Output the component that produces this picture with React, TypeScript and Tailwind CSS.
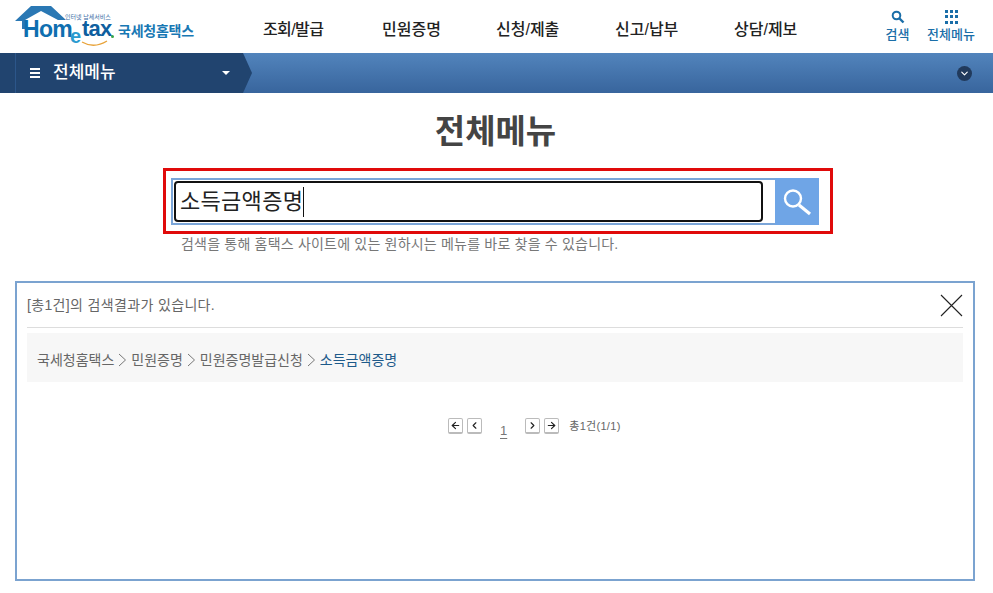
import React from 'react';
import { ArrowLeft, ArrowRight, ChevronDown, ChevronLeft, ChevronRight } from 'lucide-react';

const FONT = "font-['Liberation_Sans','Noto_Sans_CJK_KR',sans-serif]";
const menus = [
  { label: '조회/발급', w: 'w-[119px]', track: 'tracking-[-0.6px]' },
  { label: '민원증명', w: 'w-[114px]', track: '' },
  { label: '신청/제출', w: 'w-[119px]', track: '' },
  { label: '신고/납부', w: 'w-[119px]', track: '' },
  { label: '상담/제보', w: 'w-[66px]', track: '' },
];

const Logo = () => (
  <div className="relative w-[200px] h-[53px] shrink-0">
    <svg className="absolute left-[14px] top-[5px]" width="54" height="26" viewBox="0 0 54 26">
      <path d="M1 16 L17 1 L37 1 L52 15 L44 15 L27 6 L11 15 L11 24 L8 24 L8 16 Z" fill="#2a78b4" />
    </svg>
    <span className="absolute left-[65px] top-[14px] text-[6px] leading-[6px] text-[#3a6ea5] whitespace-nowrap">인터넷 납세서비스</span>
    <span className="absolute left-[23px] top-[21px] text-[23px] leading-[16px] font-bold tracking-[-0.7px] text-[#0f6fb0]">Hom</span>
    <span className="absolute left-[70px] top-[26px] text-[20px] leading-[20px] font-bold text-[#2a9bd0]">e</span>
    <span className="absolute left-[82px] top-[21px] text-[22px] leading-[16px] font-bold tracking-[-0.8px] text-[#0f5f9f]">tax</span>
    <span className="absolute left-[111px] top-[35px] w-[3px] h-[3px] rounded-full bg-[#3aa648]" />
    <svg className="absolute left-[80px] top-[40px]" width="30" height="9" viewBox="0 0 30 9">
      <path d="M2 2 Q14 9 27 1" fill="none" stroke="#e8a33a" strokeWidth="1.3" />
    </svg>
    <span className="absolute left-[118px] top-[22px] text-[14px] leading-[18px] font-bold tracking-[-0.25px] text-[#1878b4] whitespace-nowrap">국세청홈택스</span>
  </div>
);

const Sep = () => (
  <svg width="17" height="14" viewBox="0 0 17 14" className="shrink-0">
    <path d="M5 1 L11.5 7 L5 13" fill="none" stroke="#777" strokeWidth="1" />
  </svg>
);

export default function App() {
  return (
    <div className={`${FONT} w-[993px] h-[593px] bg-white overflow-hidden flex flex-col`}>
      {/* header */}
      <header className="h-[53px] flex items-start shrink-0">
        <Logo />
        <nav className="flex ml-[63px] mt-[20px]">
          {menus.map((m) => (
            <span key={m.label} className={`${m.w} ${m.track} text-[16px] leading-[20px] font-medium text-[#222] whitespace-nowrap`}>{m.label}</span>
          ))}
        </nav>
        <div className="ml-auto flex mr-[18px] mt-[9px] gap-[17px] text-[#1a6ea8] text-[13px] font-medium">
          <div className="flex flex-col items-center w-[25px]">
            <svg width="14" height="14" viewBox="0 0 14 14" className="mt-px">
              <circle cx="5.5" cy="5.5" r="3.8" fill="none" stroke="#1a6ea8" strokeWidth="2" />
              <path d="M8.5 8.5 L12.5 12.5" stroke="#1a6ea8" strokeWidth="2.4" />
            </svg>
            <span className="mt-[2px] leading-[18px] whitespace-nowrap">검색</span>
          </div>
          <div className="flex flex-col items-center w-[48px]">
            <div className="grid grid-cols-3 gap-[2px] w-[13px] mt-px h-[14px]">
              {Array.from({ length: 9 }).map((_, i) => (
                <span key={i} className="w-[3px] h-[3px] bg-[#1a6ea8]" />
              ))}
            </div>
            <span className="mt-[2px] leading-[18px] whitespace-nowrap">전체메뉴</span>
          </div>
        </div>
      </header>

      {/* sub bar */}
      <div className="relative h-[40px] shrink-0 flex items-center bg-gradient-to-b from-[#5284bc] to-[#38659d]">
        <div className="h-full w-[243px] bg-[#21446f] flex items-center relative">
          <span className="absolute left-[15px] top-0 bottom-0 w-px bg-[#2c568a]" />
          <div className="flex flex-col gap-[2px] ml-[30px] w-[10px]">
            <span className="h-[2px] bg-white" />
            <span className="h-[2px] bg-white" />
            <span className="h-[2px] bg-white" />
          </div>
          <span className="ml-[13px] text-[17px] font-medium text-white">전체메뉴</span>
          <span className="ml-auto mr-[13px] w-0 h-0 border-x-[4px] border-x-transparent border-t-[4px] border-t-white" />
        </div>
        <svg className="absolute left-[243px] top-0" width="10" height="40" viewBox="0 0 10 40">
          <path d="M0 0 L9 20 L0 40 Z" fill="#21446f" />
        </svg>
        <span className="absolute left-[957px] top-[13px] w-[15px] h-[15px] rounded-full bg-[#213a5c] flex items-center justify-center">
          <ChevronDown size={11} strokeWidth={2.5} className="text-white" />
        </span>
      </div>

      {/* title */}
      <h1 className="mt-[19px] pr-[2px] text-center text-[33px] leading-[40px] font-bold text-[#444]">전체메뉴</h1>

      {/* search */}
      <div className="mt-[16px] ml-[163px] w-[670px] h-[66px] border-[3px] border-[#e00a0a] pl-[5px] pt-[7px]">
        <div className="flex w-[648px] h-[47px]">
          <div className="w-[604px] border-[2px] border-r-0 border-[#7aa5d8] p-px pr-[12px]">
            <div className="h-full border-[2px] border-[#111] rounded-[4px] flex items-center pl-[4px]">
              <span className="text-[22px] leading-[30px] text-[#222] border-r border-[#111] tracking-[0.3px]">소득금액증명</span>
            </div>
          </div>
          <button className="w-[44px] bg-[#6fa5e6] flex items-center justify-center">
            <svg width="30" height="30" viewBox="0 0 30 30">
              <circle cx="11" cy="11.5" r="8" fill="none" stroke="#fff" strokeWidth="2.4" />
              <path d="M17 18 L28 27" stroke="#fff" strokeWidth="3.2" />
            </svg>
          </button>
        </div>
      </div>
      <p className="ml-[181px] mt-px text-[14px] leading-[18px] text-[#777] tracking-[0.2px] whitespace-nowrap">검색을 통해 홈택스 사이트에 있는 원하시는 메뉴를 바로 찾을 수 있습니다.</p>

      {/* result */}
      <section className="ml-[15px] mt-[28px] w-[960px] h-[300px] border-2 border-[#7ba3d0] px-[10px] flex flex-col">
        <div className="h-[45px] border-b border-[#ddd] flex items-center justify-between">
          <span className="text-[14px] text-[#666] tracking-[0.35px]">[총1건]의 검색결과가 있습니다.</span>
          <svg width="23" height="23" viewBox="0 0 23 23" className="mt-px">
            <path d="M1 1 L22 22 M22 1 L1 22" stroke="#222" strokeWidth="1.1" />
          </svg>
        </div>
        <div className="mt-[5px] h-[49px] bg-[#f7f7f7] flex items-center pl-[10px] pt-[5px] text-[14px] text-[#666] whitespace-nowrap">
          <span>국세청홈택스</span>
          <Sep />
          <span>민원증명</span>
          <Sep />
          <span>민원증명발급신청</span>
          <Sep />
          <span className="text-[#1d5a8a]">소득금액증명</span>
        </div>
        <div className="mt-[36px] flex items-start text-[#555] ml-[421px]">
          {[ArrowLeft, ChevronLeft].map((Icon, i) => (
            <span key={i} className="w-[15px] h-[16px] mr-[4px] border border-[#bbb] border-b-2 rounded-[2px] flex items-center justify-center">
              <Icon size={11} strokeWidth={2.5} className="text-[#222]" />
            </span>
          ))}
          <span className="ml-[14px] mr-[18px] mt-[6px] text-[13px] leading-[14px] underline underline-offset-[3px] text-[#777]">1</span>
          {[ChevronRight, ArrowRight].map((Icon, i) => (
            <span key={i} className="w-[15px] h-[16px] mr-[4px] border border-[#bbb] border-b-2 rounded-[2px] flex items-center justify-center">
              <Icon size={11} strokeWidth={2.5} className="text-[#222]" />
            </span>
          ))}
          <span className="ml-[6px] mt-px text-[11px] leading-[14px] text-[#666] tracking-[0.3px]">총1건(1/1)</span>
        </div>
      </section>
    </div>
  );
}
